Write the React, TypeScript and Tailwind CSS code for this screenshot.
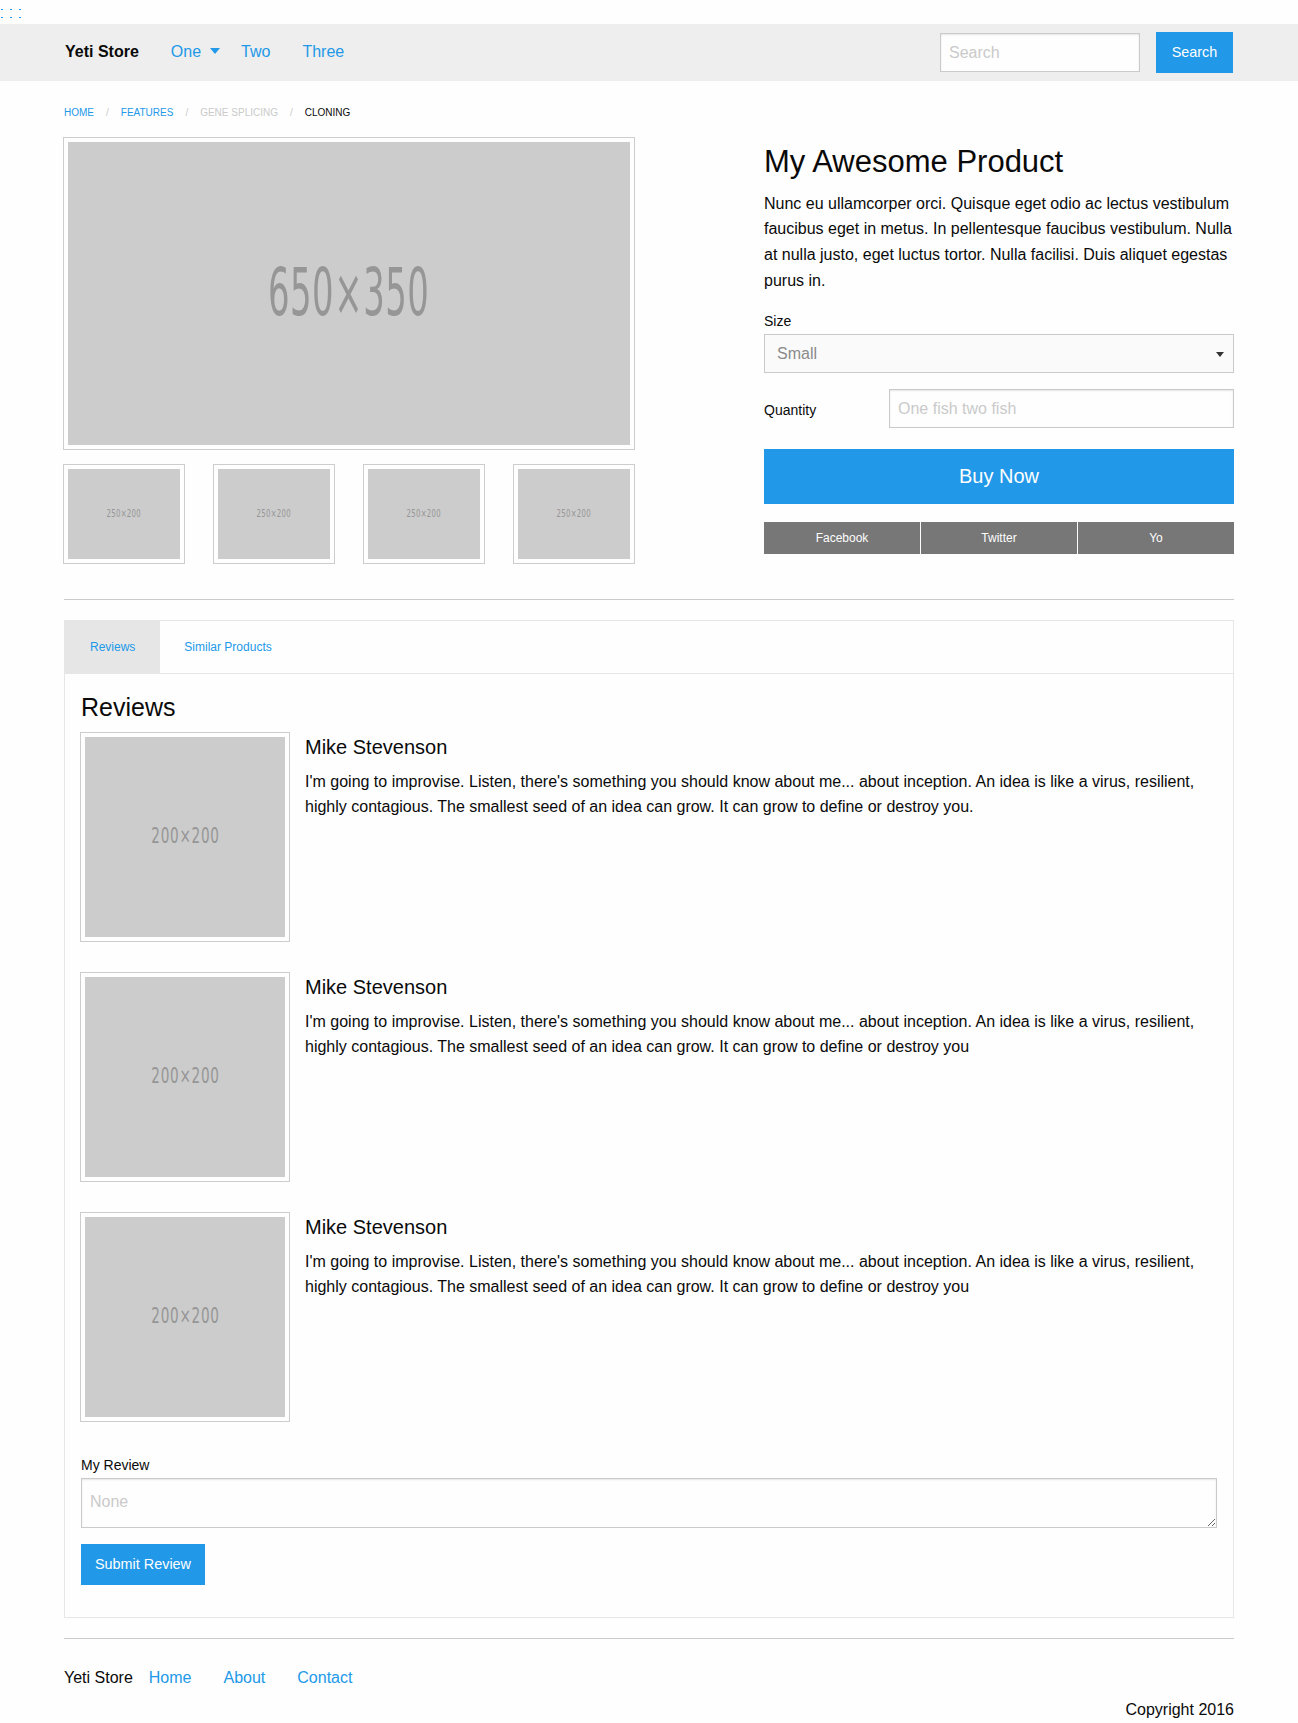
import { ReactNode } from "react";

const blue = "text-[#2199e8]";

const reviewText =
  "I'm going to improvise. Listen, there's something you should know about me... about inception. An idea is like a virus, resilient, highly contagious. The smallest seed of an idea can grow. It can grow to define or destroy you";

const reviews = [reviewText + ".", reviewText, reviewText];

function Placeholder({
  label,
  className,
  textClass,
}: {
  label: string;
  className: string;
  textClass: string;
}) {
  return (
    <div className={`flex items-center justify-center bg-[#cccccc] ${className}`}>
      <span
        className={`font-['DejaVu_Sans_Condensed','Liberation_Sans',sans-serif] text-[#969696] leading-none ${textClass}`}
      >
        {label}
      </span>
    </div>
  );
}

function Thumb({ children, className = "" }: { children: ReactNode; className?: string }) {
  return (
    <div
      className={`mb-4 border-4 border-[#fefefe] shadow-[0_0_0_1px_rgba(10,10,10,0.2)] ${className}`}
    >
      {children}
    </div>
  );
}

export default function App() {
  return (
    <div className="min-h-screen bg-[#fefefe] font-['Liberation_Sans',Arial,sans-serif] text-[#0a0a0a]">
      {/* stray menu icon dots */}
      <div className="flex h-6 flex-col gap-[7px] pl-px pt-[9px]">
        {[0, 1].map((r) => (
          <div key={r} className="flex gap-[7px]">
            <span className="h-px w-[2px] bg-[#2199e8]" />
            <span className="h-px w-[2px] bg-[#2199e8]" />
            <span className="h-px w-[2px] bg-[#2199e8]" />
          </div>
        ))}
      </div>

      {/* Top bar */}
      <nav className="h-[57px] bg-[#eeeeee]">
        <div className="mx-auto flex h-full max-w-[1200px] items-center pl-4 pr-[16px]">
          <span className="-mt-px text-base font-bold leading-none">Yeti Store</span>
          <ul className={`-mt-px ml-4 flex text-base leading-none ${blue}`}>
            <li className="relative pl-4 pr-6">
              One
              <span className="absolute right-[5px] top-1/2 -mt-[4px] h-0 w-0 border-x-[5px] border-t-[6px] border-x-transparent border-t-[#2199e8]" />
            </li>
            <li className="px-4">Two</li>
            <li className="px-4">Three</li>
          </ul>
          <div className="ml-auto flex items-center gap-4">
            <input
              placeholder="Search"
              className="h-[39px] w-[200px] border border-[#cacaca] bg-[#fefefe] px-2 text-base shadow-[inset_0_1px_2px_rgba(10,10,10,0.1)] outline-none placeholder:text-[#cacaca]"
            />
            <button className="h-[41px] w-[77px] bg-[#2199e8] text-[14.4px] leading-none text-[#fefefe]">
              Search
            </button>
          </div>
        </div>
      </nav>

      <main className="mx-auto max-w-[1200px] pt-6">
        {/* Breadcrumbs */}
        <ul className="mb-4 flex px-[15px] text-[10px] uppercase leading-[16.5px]">
          <li className={blue}>Home</li>
          <li className="mx-3 text-[#cacaca]">/</li>
          <li className={blue}>Features</li>
          <li className="mx-3 text-[#cacaca]">/</li>
          <li className="text-[#cacaca]">Gene Splicing</li>
          <li className="mx-3 text-[#cacaca]">/</li>
          <li>Cloning</li>
        </ul>

        {/* Product */}
        <div className="flex">
          <div className="w-[600px] px-[15px]">
            <Thumb>
              <Placeholder
                label="650×350"
                className="h-[303px]"
                textClass="text-[66px] scale-x-[0.57] tracking-[1px]"
              />
            </Thumb>
            <div className="-mx-[15px] flex">
              {[0, 1, 2, 3].map((i) => (
                <div key={i} className="w-[150px] px-[15px]">
                  <Thumb>
                    <Placeholder
                      label="250×200"
                      className="h-[90px]"
                      textClass="text-[11px] scale-x-[0.7] tracking-[0.5px]"
                    />
                  </Thumb>
                </div>
              ))}
            </div>
          </div>

          <div className="ml-[100px] w-[500px] px-[15px] pt-[2px]">
            <h3 className="mb-2 text-[31px] leading-[1.4]">My Awesome Product</h3>
            <p className="mb-4 text-base leading-[1.6]">
              Nunc eu ullamcorper orci. Quisque eget odio ac lectus vestibulum faucibus eget in
              metus. In pellentesque faucibus vestibulum. Nulla at nulla justo, eget luctus tortor.
              Nulla facilisi. Duis aliquet egestas purus in.
            </p>
            <label className="block text-sm leading-[1.8]">Size</label>
            <div className="relative mb-4 flex h-[39px] items-center border border-[#cacaca] bg-[#fafafa] pl-3 text-base text-[#8a8a8a]">
              Small
              <span className="absolute right-[9px] top-1/2 -mt-[2px] h-0 w-0 border-x-[4px] border-t-[5px] border-x-transparent border-t-[#333333]" />
            </div>
            <div className="-mx-[15px] flex">
              <label className="mb-4 w-[125px] px-[15px] py-[9px] text-sm leading-[1.8]">
                Quantity
              </label>
              <div className="w-[375px] px-[15px]">
                <input
                  placeholder="One fish two fish"
                  className="h-[39px] w-full border border-[#cacaca] bg-[#fefefe] px-2 text-base shadow-[inset_0_1px_2px_rgba(10,10,10,0.1)] outline-none placeholder:text-[#cacaca]"
                />
              </div>
            </div>
            <button className="mb-[18px] h-[55px] w-full bg-[#2199e8] text-[20px] leading-none text-[#fefefe]">
              Buy Now
            </button>
            <div className="mb-4 flex gap-px">
              {["Facebook", "Twitter", "Yo"].map((s) => (
                <button
                  key={s}
                  className="h-8 flex-1 bg-[#777777] text-xs leading-none text-[#fefefe]"
                >
                  {s}
                </button>
              ))}
            </div>
          </div>
        </div>

        <hr className="mx-[15px] my-5 border-0 border-t border-[#cacaca]" />

        {/* Tabs */}
        <div className="px-[15px]">
          <ul className="flex border border-[#e6e6e6] bg-[#fefefe] text-xs leading-none">
            <li className={`bg-[#e6e6e6] px-[25px] py-5 ${blue}`}>Reviews</li>
            <li className={`px-6 py-5 ${blue}`}>Similar Products</li>
          </ul>
          <div className="border border-t-0 border-[#e6e6e6] p-4">
            <h4 className="mb-2 text-[25px] leading-[1.4]">Reviews</h4>
            {reviews.map((text, i) => (
              <div key={i} className="mb-4 flex">
                <div className="shrink-0 pr-4">
                  <Thumb>
                    <Placeholder
                      label="200×200"
                      className="h-[200px] w-[200px]"
                      textClass="text-[21px] scale-x-[0.72] tracking-[1px]"
                    />
                  </Thumb>
                </div>
                <div>
                  <h5 className="mb-2 text-[20px] leading-[1.4]">Mike Stevenson</h5>
                  <p className="mb-4 text-base leading-[1.6]">{text}</p>
                </div>
              </div>
            ))}
            <label className="block text-sm leading-[1.8]">My Review</label>
            <textarea
              placeholder="None"
              className="mb-4 block h-[50px] w-full border border-[#cacaca] bg-[#fefefe] px-2 pb-2 pt-[11px] text-base leading-normal shadow-[inset_0_1px_2px_rgba(10,10,10,0.1)] outline-none placeholder:text-[#cacaca]"
            />
            <button className="mb-4 h-[41px] bg-[#2199e8] px-[14px] text-[14.4px] leading-none text-[#fefefe]">
              Submit Review
            </button>
          </div>
        </div>

        <hr className="mx-[15px] my-5 border-0 border-t border-[#cacaca]" />

        {/* Footer */}
        <footer className="px-[15px]">
          <ul className="flex items-center text-base leading-none">
            <li className="py-[11.2px]">Yeti Store</li>
            <li className={`px-4 py-[11.2px] ${blue}`}>Home</li>
            <li className={`px-4 py-[11.2px] ${blue}`}>About</li>
            <li className={`px-4 py-[11.2px] ${blue}`}>Contact</li>
          </ul>
          <p className="text-right text-base leading-[1.6]">Copyright 2016</p>
        </footer>
      </main>
    </div>
  );
}
